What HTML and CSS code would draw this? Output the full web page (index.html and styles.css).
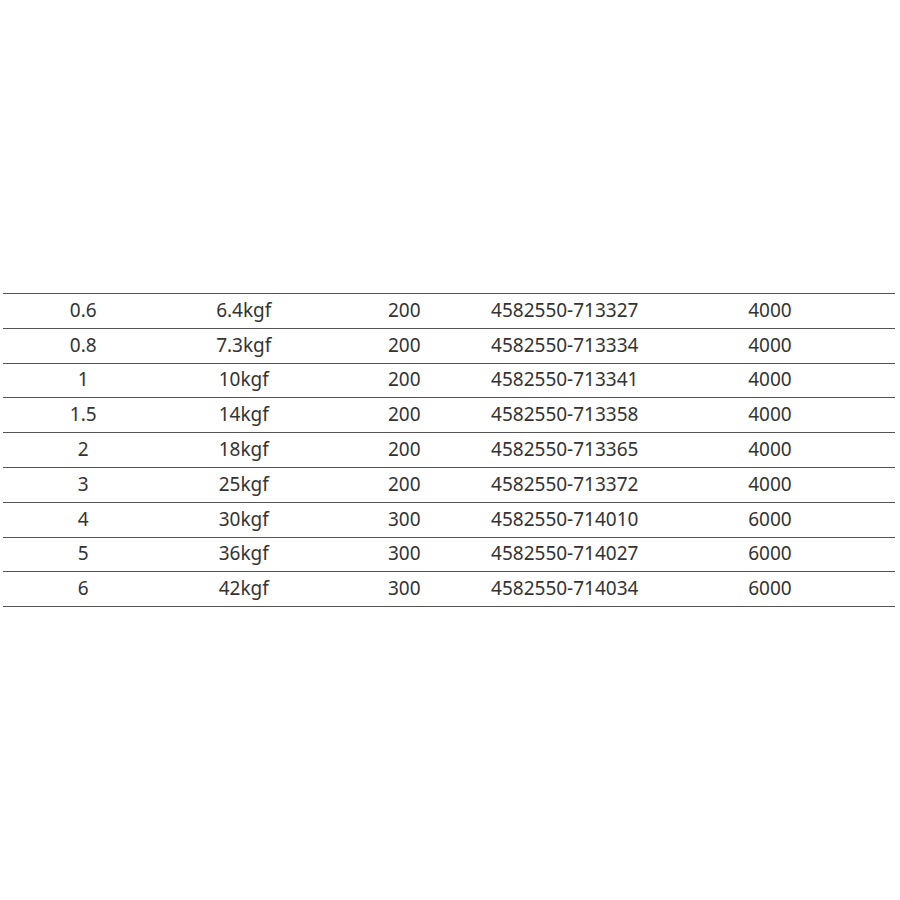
FILE: index.html
```html
<!DOCTYPE html>
<html>
<head>
<meta charset="utf-8">
<link rel="stylesheet" href="styles.css">
</head>
<body>
<table class="spec">
  <colgroup>
    <col class="c1"><col class="c2"><col class="c3"><col class="c4"><col class="c5">
  </colgroup>
  <tbody>
    <tr><td>0.6</td><td>6.4kgf</td><td>200</td><td>4582550-713327</td><td>4000</td></tr>
    <tr><td>0.8</td><td>7.3kgf</td><td>200</td><td>4582550-713334</td><td>4000</td></tr>
    <tr><td>1</td><td>10kgf</td><td>200</td><td>4582550-713341</td><td>4000</td></tr>
    <tr><td>1.5</td><td>14kgf</td><td>200</td><td>4582550-713358</td><td>4000</td></tr>
    <tr><td>2</td><td>18kgf</td><td>200</td><td>4582550-713365</td><td>4000</td></tr>
    <tr><td>3</td><td>25kgf</td><td>200</td><td>4582550-713372</td><td>4000</td></tr>
    <tr><td>4</td><td>30kgf</td><td>300</td><td>4582550-714010</td><td>6000</td></tr>
    <tr><td>5</td><td>36kgf</td><td>300</td><td>4582550-714027</td><td>6000</td></tr>
    <tr><td>6</td><td>42kgf</td><td>300</td><td>4582550-714034</td><td>6000</td></tr>
  </tbody>
</table>
</body>
</html>
```
FILE: styles.css
```css
html, body {
  margin: 0;
  padding: 0;
  background: #fff;
}
body {
  font-family: "Noto Sans", "Open Sans", sans-serif;
  color: #333;
}
.spec {
  margin: 293px 0 0 3px;
  width: 892px;
  border-collapse: collapse;
  table-layout: fixed;
  border-top: 1px solid #555;
}
.c1, .c2, .c3, .c4 { width: 160.5px; }
.c5 { width: 250px; }
.spec td {
  height: 31.8px;
  padding: 0 0 2px;
  text-align: center;
  vertical-align: middle;
  font-size: 19px;
  line-height: 24px;
  border-bottom: 1px solid #555;
}
```
